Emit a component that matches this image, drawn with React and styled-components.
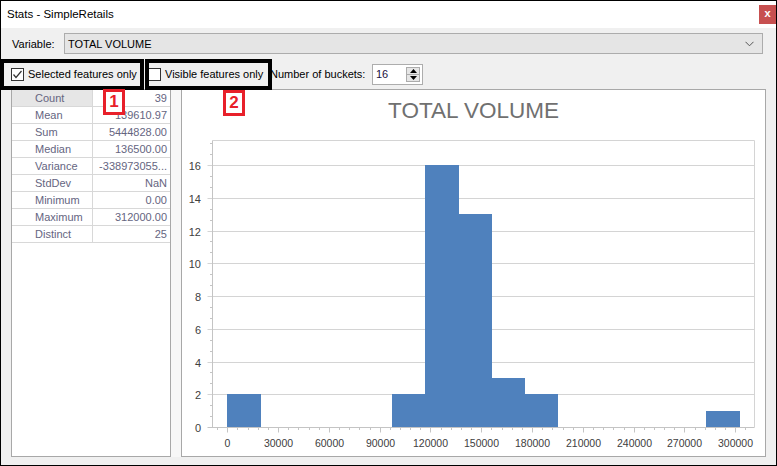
import React from "react";
import styled, { createGlobalStyle } from "styled-components";

const GlobalStyle = createGlobalStyle`
  html, body { margin: 0; padding: 0; background: #f0f0f0; }
  * { box-sizing: border-box; }
  body { font-family: "Liberation Sans", Arial, sans-serif; font-size: 11px; color: #000; }
`;

const Window = styled.div`
  position: relative;
  width: 777px;
  height: 466px;
  border: 1px solid #000;
  background: #f0f0f0;
  display: flex;
  flex-direction: column;
  overflow: hidden;
`;

const TitleBar = styled.div`
  height: 27px;
  flex: none;
  background: #fff;
  display: flex;
  align-items: flex-start;
`;

const TitleText = styled.div`
  font-size: 11.5px;
  line-height: 27px;
  padding-left: 6px;
`;

const CloseButton = styled.div`
  margin-left: auto;
  margin-top: 4px;
  width: 17px;
  height: 19px;
  background: #c75050;
  color: #fff;
  font-family: "Liberation Mono", monospace;
  font-weight: bold;
  font-size: 11px;
  line-height: 18px;
  text-align: center;
`;

const VariableRow = styled.div`
  height: 31px;
  flex: none;
  display: flex;
  align-items: center;
  padding: 0 13px 0 11px;
`;

const FieldLabel = styled.div`
  width: ${(p) => p.$width}px;
  flex: none;
  white-space: nowrap;
`;

const Combo = styled.div`
  flex: 1;
  height: 21px;
  background: #e5e5e5;
  border: 1px solid #acacac;
  display: flex;
  align-items: center;
  padding: 0 8px 0 3px;
  justify-content: space-between;
`;

const CheckRow = styled.div`
  height: 30px;
  flex: none;
  display: flex;
  align-items: center;
  padding-left: 10px;
`;

const CheckOption = styled.label`
  width: ${(p) => p.$width}px;
  flex: none;
  display: flex;
  align-items: center;
  gap: 4px;
  white-space: nowrap;
`;

const CheckBox = styled.span`
  width: 13px;
  height: 13px;
  border: 1px solid #333;
  background: #fff;
  display: inline-flex;
  align-items: center;
  justify-content: center;
  flex: none;
`;

const SpinBox = styled.div`
  width: 51px;
  height: 21px;
  border: 1px solid #adadad;
  background: #fff;
  display: flex;
  align-items: center;
  padding: 0 2px 0 3px;
  justify-content: space-between;
  color: #1a1040;
`;

const SpinButtons = styled.div`
  display: flex;
  flex-direction: column;
  gap: 0;
  width: 14px;
  height: 15px;
`;

const SpinButton = styled.div`
  flex: 1;
  background: #e6e6e6;
  border: 1px solid #acacac;
  display: flex;
  align-items: center;
  justify-content: center;
  &:first-child { border-bottom: none; }
`;

const Content = styled.div`
  height: 368px;
  flex: none;
  display: flex;
  padding: 0 10px;
`;

const StatsPanel = styled.div`
  width: 160px;
  flex: none;
  background: #fff;
  border: 1px solid #a8a8a8;
  border-top-color: #a0a0a0;
`;

const StatsGrid = styled.div`
  display: grid;
  grid-template-columns: 81px 1fr;
`;

const Cell = styled.div`
  height: 17px;
  line-height: 16px;
  border-bottom: 1px solid #d8d8d8;
  color: #65657f;
  white-space: nowrap;
  overflow: hidden;
  ${(p) =>
    p.$label
      ? `padding-left: 23px; border-right: 1px solid #d8d8d8;`
      : `text-align: right; padding-right: 3px;`}
  background: ${(p) => (p.$selected ? "#e6e6e6" : "#fff")};
`;

const Splitter = styled.div`
  width: 10px;
  flex: none;
  background: #f7f7f7;
`;

const ChartPanel = styled.div`
  flex: 1;
  background: #fff;
  border: 1px solid #a8a8a8;
  display: flex;
  flex-direction: column;
`;

const ChartTitle = styled.div`
  margin-top: 7px;
  height: 28px;
  line-height: 28px;
  font-size: 22.5px;
  color: #707070;
  text-align: center;
  flex: none;
`;

const PlotSvg = styled.svg`
  display: block;
  flex: 1;
  width: 583px;
  height: 331px;
  font-family: "Liberation Sans", Arial, sans-serif;
`;

const AnnotBox = styled.div`
  position: absolute;
  left: ${(p) => p.$left}px;
  top: 58px;
  width: ${(p) => p.$width}px;
  height: 31px;
  border: 4px solid #000;
  pointer-events: none;
`;

const AnnotTag = styled.div`
  position: absolute;
  left: ${(p) => p.$left}px;
  top: ${(p) => p.$top}px;
  width: 22px;
  height: 26px;
  border: 3px solid #e8202a;
  background: #fff;
  color: #e8202a;
  font-weight: bold;
  font-size: 17px;
  line-height: 20px;
  text-align: center;
`;

const stats = [
  ["Count", "39"],
  ["Mean", "139610.97"],
  ["Sum", "5444828.00"],
  ["Median", "136500.00"],
  ["Variance", "-338973055..."],
  ["StdDev", "NaN"],
  ["Minimum", "0.00"],
  ["Maximum", "312000.00"],
  ["Distinct", "25"],
];

const bars = [
  { start: 0, count: 2 },
  { start: 97500, count: 2 },
  { start: 117000, count: 16 },
  { start: 136500, count: 13 },
  { start: 156000, count: 3 },
  { start: 175500, count: 2 },
  { start: 282700, count: 1 },
];
const BIN = 19500;

// svg space: page x - 182, page y - 125
const OX = 182;
const OY = 125;
const xOf = (v) => 227.3 + v * 0.00169333 - OX;
const yOf = (c) => Math.round(427 - c * 16.375) - OY;

const LEFT = 30.5;
const RIGHT = 572.5;
const TOP = 15.5;
const BOTTOM = 302.5;
const AXIS = "#c4c4c4";
const GRID = "#d4d4d4";

function Chart() {
  const majorX = [];
  for (let v = 0; v <= 300000; v += 30000) majorX.push(v);
  const minorX = [];
  for (let v = -6000; v <= 306000; v += 6000) if (v % 30000 !== 0) minorX.push(v);
  const majorY = [];
  for (let c = 0; c <= 16; c += 2) majorY.push(c);
  const minorY = [];
  for (let k = 1; k * (2 / 3) < 17.5; k++) if (k % 3 !== 0) minorY.push(k * (2 / 3));

  return (
    <PlotSvg viewBox="0 0 583 331">
      {majorY.map((c) => (
        <line key={"g" + c} x1={LEFT - 5} x2={RIGHT} y1={yOf(c) + 0.5} y2={yOf(c) + 0.5} stroke={c === 0 ? AXIS : GRID} />
      ))}
      {minorY.map((c) => (
        <line key={"m" + c} x1={LEFT - 2.5} x2={LEFT} y1={yOf(c) + 0.5} y2={yOf(c) + 0.5} stroke={AXIS} />
      ))}
      <line x1={LEFT} x2={RIGHT} y1={TOP} y2={TOP} stroke={GRID} />
      <line x1={RIGHT} x2={RIGHT} y1={TOP} y2={BOTTOM} stroke={GRID} />
      <line x1={LEFT} x2={LEFT} y1={TOP} y2={BOTTOM} stroke={AXIS} />
      {bars.map((b) => {
        const x1 = Math.round(xOf(b.start));
        const x2 = Math.round(xOf(b.start + BIN)) + 1;
        const y = yOf(b.count);
        return <rect key={b.start} x={x1} y={y} width={x2 - x1} height={BOTTOM - 0.5 - y} fill="#4f81bd" shapeRendering="crispEdges" />;
      })}
      {majorX.map((v) => (
        <line key={"tx" + v} x1={Math.round(xOf(v)) + 0.5} x2={Math.round(xOf(v)) + 0.5} y1={BOTTOM} y2={BOTTOM + 5} stroke={AXIS} />
      ))}
      {minorX.map((v) => (
        <line key={"mx" + v} x1={Math.round(xOf(v)) + 0.5} x2={Math.round(xOf(v)) + 0.5} y1={BOTTOM} y2={BOTTOM + 2.5} stroke={AXIS} />
      ))}
      {majorY.map((c) => (
        <text key={"ly" + c} x={19} y={yOf(c) + 0.5} textAnchor="end" dominantBaseline="central" fontSize="11" fill="#404040">
          {c}
        </text>
      ))}
      {majorX.map((v) => (
        <text key={"lx" + v} x={Math.round(xOf(v)) + 0.5} y={318} textAnchor="middle" dominantBaseline="central" fontSize="10.5" fill="#404040">
          {v}
        </text>
      ))}
    </PlotSvg>
  );
}

function CheckMark() {
  return (
    <svg width="11" height="11" viewBox="0 0 11 11">
      <polyline points="1.5,5.5 4,8.5 9.5,2" fill="none" stroke="#333" strokeWidth="1.2" />
    </svg>
  );
}

function Chevron() {
  return (
    <svg width="9" height="6" viewBox="0 0 9 6">
      <polyline points="0.5,0.8 4.5,4.8 8.5,0.8" fill="none" stroke="#555" strokeWidth="1" />
    </svg>
  );
}

function Arrow({ up }) {
  return (
    <svg width="7" height="4" viewBox="0 0 7 4">
      <polygon points={up ? "3.5,0 7,4 0,4" : "0,0 7,0 3.5,4"} fill="#000" />
    </svg>
  );
}

export default function App() {
  return (
    <>
      <GlobalStyle />
      <Window>
        <TitleBar>
          <TitleText>Stats - SimpleRetails</TitleText>
          <CloseButton>x</CloseButton>
        </TitleBar>
        <VariableRow>
          <FieldLabel $width={52}>Variable:</FieldLabel>
          <Combo>
            <span>TOTAL VOLUME</span>
            <Chevron />
          </Combo>
        </VariableRow>
        <CheckRow>
          <CheckOption $width={137}>
            <CheckBox>
              <CheckMark />
            </CheckBox>
            Selected features only
          </CheckOption>
          <CheckOption $width={122}>
            <CheckBox />
            Visible features only
          </CheckOption>
          <FieldLabel $width={102}>Number of buckets:</FieldLabel>
          <SpinBox>
            <span>16</span>
            <SpinButtons>
              <SpinButton>
                <Arrow up />
              </SpinButton>
              <SpinButton>
                <Arrow />
              </SpinButton>
            </SpinButtons>
          </SpinBox>
        </CheckRow>
        <Content>
          <StatsPanel>
            <StatsGrid>
              {stats.map(([k, v], i) => (
                <React.Fragment key={k}>
                  <Cell $label $selected={i === 0}>{k}</Cell>
                  <Cell>{v}</Cell>
                </React.Fragment>
              ))}
            </StatsGrid>
          </StatsPanel>
          <Splitter />
          <ChartPanel>
            <ChartTitle>TOTAL VOLUME</ChartTitle>
            <Chart />
          </ChartPanel>
        </Content>
        <AnnotBox $left={-1} $width={144} />
        <AnnotBox $left={144} $width={127} />
        <AnnotTag $left={102} $top={88}>1</AnnotTag>
        <AnnotTag $left={222} $top={89}>2</AnnotTag>
      </Window>
    </>
  );
}
